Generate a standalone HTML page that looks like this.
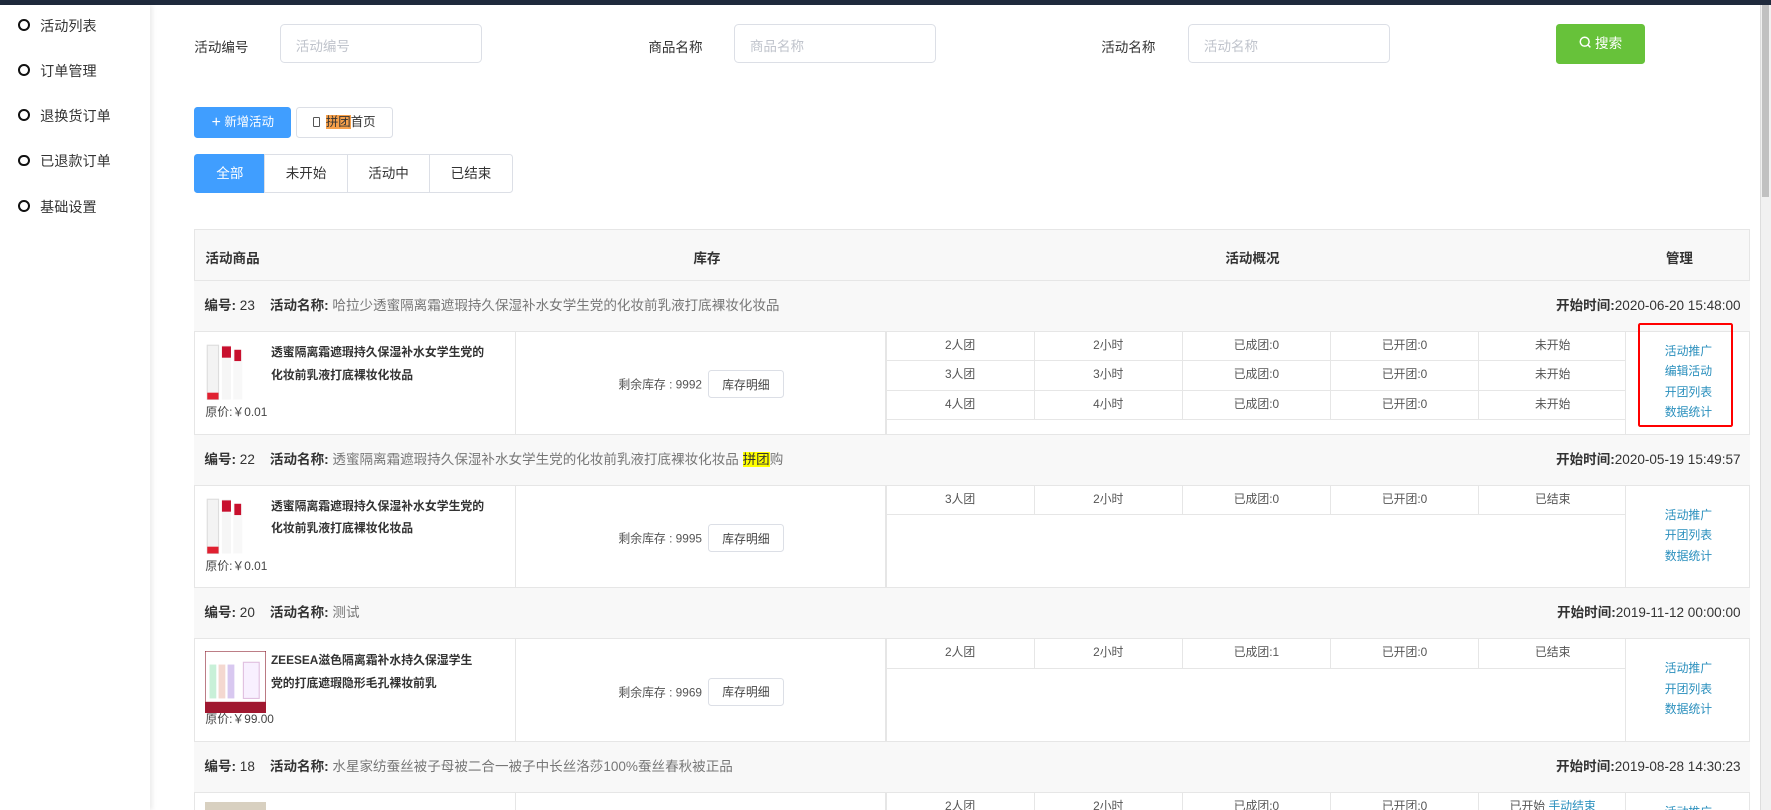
<!DOCTYPE html>
<html><head><meta charset="utf-8">
<style>
*{box-sizing:border-box;margin:0;padding:0}
html,body{width:1771px;height:810px;overflow:hidden;background:#fff}
body{font-family:"Liberation Sans","Noto Sans CJK SC",sans-serif;color:#333}
#w{zoom:1.1295;width:1568px;height:717px;position:relative;overflow:hidden}
.a{position:absolute}
.topbar{left:0;top:0;width:1568px;height:4px;background:#1f2a3c}
.side{left:0;top:4px;width:133px;height:713px;background:#fff;box-shadow:2px 0 4px rgba(0,0,0,.08)}
.si{position:absolute;left:16px;font-size:12.5px;color:#333;line-height:16px}
.si:before{content:"";display:inline-block;width:7px;height:7px;border:2px solid #111;border-radius:50%;margin-right:9px;vertical-align:0}
.lbl{font-size:12px;color:#333}
.inp{height:35px;border:1px solid #dcdfe6;border-radius:4px;font-size:12px;color:#c0c4cc;padding:9px 13px}
.btn{border-radius:3px;font-size:11px;text-align:center}
.tab{top:136px;height:35px;border:1px solid #dcdfe6;font-size:12px;text-align:center;line-height:33px;color:#333}
.tbl{left:172px;width:1377px;border:1px solid #e6e6e6}
.hdr{background:#f8f8f8;font-size:12px;font-weight:bold}
.grp{left:172px;width:1377px;height:46px;background:#f8f8f8;border-top:1px solid #e6e6e6;border-bottom:1px solid #e6e6e6;font-size:12px;line-height:44px;padding-left:9px}
.grp b{font-weight:bold}
.grp .g{color:#777}
.grp .t{position:absolute;right:8px;top:0}
.prod{left:172px;width:1377px;height:90px;border-left:1px solid #e6e6e6;border-right:1px solid #e6e6e6}
.vl{position:absolute;top:0;bottom:0;width:1px;background:#e6e6e6}
.title{position:absolute;left:67px;top:8px;width:192px;font-size:10.5px;font-weight:bold;line-height:20px;color:#333}
.price{position:absolute;left:9px;top:63px;font-size:10.5px;color:#444}
.stock{position:absolute;left:284px;width:328px;top:34px;text-align:center;font-size:10.5px;color:#555}
.stock span{display:inline-block;border:1px solid #dcdfe6;border-radius:3px;padding:4px 12px;margin-left:5px;color:#444}
.sub{position:absolute;left:612px;width:655px;height:26px;border-bottom:1px solid #e6e6e6;font-size:10.5px;color:#555;display:flex}
.sub div{flex:1;text-align:center;line-height:24px;border-right:1px solid #e6e6e6}
.sub div:last-child{border-right:none}
.mg{position:absolute;left:1267px;width:110px;text-align:center;font-size:10.5px;color:#2a8fbd;line-height:18px}
.img1{position:absolute;left:9px;top:10px;width:38px;height:52px}
</style></head><body><div id="w">
<div class="a topbar"></div>
<div class="a side">
<div class="si" style="top:11px">活动列表</div>
<div class="si" style="top:51px">订单管理</div>
<div class="si" style="top:91px">退换货订单</div>
<div class="si" style="top:131px">已退款订单</div>
<div class="si" style="top:171px">基础设置</div>
</div>
<div class="a" style="left:1558px;top:4px;width:10px;height:713px;background:#f1f1f1;border-left:1px solid #ddd"></div>
<div class="a" style="left:1560px;top:4px;width:6px;height:170px;background:#c1c1c1"></div>

<div class="a lbl" style="left:172px;top:32px">活动编号</div>
<div class="a inp" style="left:248px;top:21px;width:179px">活动编号</div>
<div class="a lbl" style="left:574px;top:32px">商品名称</div>
<div class="a inp" style="left:650px;top:21px;width:179px">商品名称</div>
<div class="a lbl" style="left:975px;top:32px">活动名称</div>
<div class="a inp" style="left:1052px;top:21px;width:179px">活动名称</div>
<div class="a btn" style="left:1378px;top:21px;width:78px;height:36px;background:#67c23a;color:#fff;font-size:12px;line-height:36px">
<svg width="11" height="11" viewBox="0 0 12 12" style="vertical-align:-1px"><circle cx="5.5" cy="5.5" r="4.3" fill="none" stroke="#fff" stroke-width="1.4"/><path d="M8.6 8.6L11 11" stroke="#fff" stroke-width="1.4"/></svg> 搜索</div>

<div class="a btn" style="left:172px;top:95px;width:86px;height:27px;background:#409eff;color:#fff;line-height:27px"><span style="font-size:14px;vertical-align:-1px">+</span> 新增活动</div>
<div class="a btn" style="left:262px;top:95px;width:86px;height:27px;border:1px solid #dcdfe6;line-height:25px;color:#333">
<span style="display:inline-block;width:6px;height:9px;border:1px solid #555;border-radius:1px;vertical-align:-1px;margin-right:5px"></span><span style="background:#f7a04a">拼团</span>首页</div>

<div class="a tab" style="left:172px;width:63px;background:#409eff;border-color:#409eff;color:#fff;border-radius:3px 0 0 3px">全部</div>
<div class="a tab" style="left:234px;width:74px">未开始</div>
<div class="a tab" style="left:307px;width:74px">活动中</div>
<div class="a tab" style="left:380px;width:74px;border-radius:0 3px 3px 0">已结束</div>

<div class="a tbl hdr" style="top:203px;height:46px">
<span class="a" style="left:9px;top:15px">活动商品</span>
<span class="a" style="left:441px;top:15px">库存</span>
<span class="a" style="left:912px;top:15px">活动概况</span>
<span class="a" style="left:1302px;top:15px">管理</span>
</div>

<div class="a grp" style="top:248px"><b>编号:</b> 23 &nbsp;&nbsp; <b>活动名称:</b> <span class="g">哈拉少透蜜隔离霜遮瑕持久保湿补水女学生党的化妆前乳液打底裸妆化妆品</span><span class="t"><b>开始时间:</b>2020-06-20 15:48:00</span></div>
<div class="a prod" style="top:294px">
<svg class="img1" viewBox="0 0 38 52"><rect x="2" y="2" width="10" height="48" fill="#f3f3f3" stroke="#ddd"/><rect x="2" y="44" width="10" height="6" fill="#e02030"/><rect x="15" y="2" width="8" height="48" fill="#f6f6f6"/><rect x="15" y="3" width="8" height="10" fill="#c8102e"/><rect x="25" y="6" width="8" height="44" fill="#f8f8f8"/><rect x="26" y="6" width="6" height="10" fill="#c8102e"/></svg>
<div class="title">透蜜隔离霜遮瑕持久保湿补水女学生党的化妆前乳液打底裸妆化妆品</div>
<div class="price">原价:￥0.01</div>
<div class="vl" style="left:283px"></div><div class="vl" style="left:611px"></div><div class="vl" style="left:1266px"></div>
<div class="stock">剩余库存 : 9992<span>库存明细</span></div>
<div class="sub" style="top:0"><div>2人团</div><div>2小时</div><div>已成团:0</div><div>已开团:0</div><div>未开始</div></div>
<div class="sub" style="top:26px"><div>3人团</div><div>3小时</div><div>已成团:0</div><div>已开团:0</div><div>未开始</div></div>
<div class="sub" style="top:52px"><div>4人团</div><div>4小时</div><div>已成团:0</div><div>已开团:0</div><div>未开始</div></div>
<div class="mg" style="top:8px">活动推广<br>编辑活动<br>开团列表<br>数据统计</div>
<div class="a" style="left:1277px;top:-8px;width:84px;height:92px;border:2px solid #f00;border-radius:2px"></div>
</div>

<div class="a grp" style="top:384px"><b>编号:</b> 22 &nbsp;&nbsp; <b>活动名称:</b> <span class="g">透蜜隔离霜遮瑕持久保湿补水女学生党的化妆前乳液打底裸妆化妆品 <span style="background:#ff0;color:#333">拼团</span>购</span><span class="t"><b>开始时间:</b>2020-05-19 15:49:57</span></div>
<div class="a prod" style="top:430px">
<svg class="img1" viewBox="0 0 38 52"><rect x="2" y="2" width="10" height="48" fill="#f3f3f3" stroke="#ddd"/><rect x="2" y="44" width="10" height="6" fill="#e02030"/><rect x="15" y="2" width="8" height="48" fill="#f6f6f6"/><rect x="15" y="3" width="8" height="10" fill="#c8102e"/><rect x="25" y="6" width="8" height="44" fill="#f8f8f8"/><rect x="26" y="6" width="6" height="10" fill="#c8102e"/></svg>
<div class="title">透蜜隔离霜遮瑕持久保湿补水女学生党的化妆前乳液打底裸妆化妆品</div>
<div class="price">原价:￥0.01</div>
<div class="vl" style="left:283px"></div><div class="vl" style="left:611px"></div><div class="vl" style="left:1266px"></div>
<div class="stock">剩余库存 : 9995<span>库存明细</span></div>
<div class="sub" style="top:0"><div>3人团</div><div>2小时</div><div>已成团:0</div><div>已开团:0</div><div>已结束</div></div>
<div class="mg" style="top:17px">活动推广<br>开团列表<br>数据统计</div>
</div>

<div class="a grp" style="top:520px"><b>编号:</b> 20 &nbsp;&nbsp; <b>活动名称:</b> <span class="g">测试</span><span class="t"><b>开始时间:</b>2019-11-12 00:00:00</span></div>
<div class="a prod" style="top:566px">
<svg class="a" style="left:9px;top:10px" width="54" height="55" viewBox="0 0 54 55"><rect x="0" y="0" width="54" height="55" fill="#fff" stroke="#8a1a2a"/><rect x="4" y="12" width="6" height="30" fill="#c8f0d8"/><rect x="12" y="12" width="6" height="30" fill="#f4d8d0"/><rect x="20" y="12" width="6" height="30" fill="#d8c8f0"/><rect x="34" y="10" width="14" height="32" fill="#f8f0ff" stroke="#e0c0e0"/><rect x="0" y="45" width="54" height="10" fill="#a01830"/></svg>
<div class="title" style="top:9px;width:188px">ZEESEA滋色隔离霜补水持久保湿学生党的打底遮瑕隐形毛孔裸妆前乳</div>
<div class="price">原价:￥99.00</div>
<div class="vl" style="left:283px"></div><div class="vl" style="left:611px"></div><div class="vl" style="left:1266px"></div>
<div class="stock">剩余库存 : 9969<span>库存明细</span></div>
<div class="sub" style="top:0"><div>2人团</div><div>2小时</div><div>已成团:1</div><div>已开团:0</div><div>已结束</div></div>
<div class="mg" style="top:17px">活动推广<br>开团列表<br>数据统计</div>
</div>

<div class="a grp" style="top:656px"><b>编号:</b> 18 &nbsp;&nbsp; <b>活动名称:</b> <span class="g">水星家纺蚕丝被子母被二合一被子中长丝洛莎100%蚕丝春秋被正品</span><span class="t"><b>开始时间:</b>2019-08-28 14:30:23</span></div>
<div class="a prod" style="top:702px">
<div class="a" style="left:9px;top:8px;width:54px;height:10px;background:#d8d0c0"></div>
<div class="vl" style="left:283px"></div><div class="vl" style="left:611px"></div><div class="vl" style="left:1266px"></div>
<div class="sub" style="top:0"><div>2人团</div><div>2小时</div><div>已成团:0</div><div>已开团:0</div><div>已开始 <span style="color:#2a8fbd">手动结束</span></div></div>
<div class="mg" style="top:8px">活动推广</div>
</div>
</div></body></html>
